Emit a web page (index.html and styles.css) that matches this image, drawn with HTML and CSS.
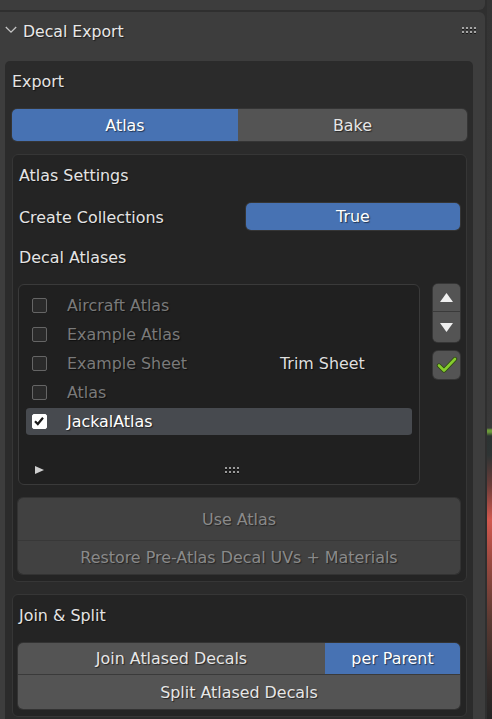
FILE: index.html
```html
<!DOCTYPE html>
<html>
<head>
<meta charset="utf-8">
<link rel="stylesheet" href="styles.css">
</head>
<body>
<div class="region">
  <div class="prev"></div>
  <div class="panel">
    <div class="header">
      <svg class="chev" width="12" height="8" viewBox="0 0 12 8"><polyline points="0.8,1 6,6.2 11.2,1" fill="none" stroke="#c4c4c4" stroke-width="1.3"/></svg>
      <span class="title">Decal Export</span>
      <span class="grip hgrip"><i></i><i></i><i></i><i></i><i></i><i></i><i></i><i></i></span>
    </div>
    <div class="exportbox">
      <div class="label">Export</div>
      <div class="toggle">
        <div class="tbtn active">Atlas</div>
        <div class="tbtn">Bake</div>
      </div>
      <div class="box settings">
        <div class="label lbl">Atlas Settings</div>
        <div class="proprow">
          <div class="label lbl grow">Create Collections</div>
          <div class="truebtn">True</div>
        </div>
        <div class="label lbl gap13">Decal Atlases</div>
        <div class="listrow">
          <div class="list">
            <div class="item"><span class="cb"></span><span class="name dim">Aircraft Atlas</span></div>
            <div class="item"><span class="cb"></span><span class="name dim">Example Atlas</span></div>
            <div class="item"><span class="cb"></span><span class="name dim">Example Sheet</span><span class="type">Trim Sheet</span></div>
            <div class="item"><span class="cb"></span><span class="name dim">Atlas</span></div>
            <div class="item sel"><span class="cb on"><svg width="14" height="14" viewBox="0 0 14 14"><polyline points="3,7.2 5.8,10 11,3.8" fill="none" stroke="#1a1a1a" stroke-width="2.2"/></svg></span><span class="name">JackalAtlas</span></div>
            <div class="listfoot">
              <svg class="tri" width="9" height="8" viewBox="0 0 9 8"><polygon points="0,0 9,4 0,8" fill="#cfcfcf"/></svg>
              <span class="grip lgrip"><i></i><i></i><i></i><i></i><i></i><i></i><i></i><i></i></span>
            </div>
          </div>
          <div class="side">
            <div class="updown">
              <div class="sbtn up"><svg width="13" height="9" viewBox="0 0 13 9"><polygon points="6.5,0 13,9 0,9" fill="#f0f0f0"/></svg></div>
              <div class="sbtn down"><svg width="13" height="9" viewBox="0 0 13 9"><polygon points="0,0 13,0 6.5,9" fill="#f0f0f0"/></svg></div>
            </div>
            <div class="sbtn check"><svg width="22" height="18" viewBox="0 0 22 18"><polyline points="3,9.5 8,14.5 19,3" fill="none" stroke="#2f4a12" stroke-width="4.4" stroke-linejoin="round" stroke-linecap="round"/><polyline points="3,9.5 8,14.5 19,3" fill="none" stroke="#86cc2e" stroke-width="2.6" stroke-linejoin="round" stroke-linecap="round"/></svg></div>
          </div>
        </div>
        <div class="stack">
          <div class="dbtn use">Use Atlas</div>
          <div class="dbtn restore">Restore Pre-Atlas Decal UVs + Materials</div>
        </div>
      </div>
      <div class="box join">
        <div class="label lbl">Join &amp; Split</div>
        <div class="jstack">
          <div class="jrow">
            <div class="jbtn grow">Join Atlased Decals</div>
            <div class="jbtn blue">per Parent</div>
          </div>
          <div class="jbtn split">Split Atlased Decals</div>
        </div>
      </div>
    </div>
  </div>
</div>
<div class="viewport"></div>
</body>
</html>
```
FILE: styles.css
```css
* { box-sizing: border-box; }
html, body { margin: 0; padding: 0; }
body {
  width: 492px;
  height: 719px;
  overflow: hidden;
  background: #2f2f2f;
  display: flex;
  font-family: "DejaVu Sans", sans-serif;
  font-size: 15.9px;
  color: #e4e4e4;
}
.region {
  width: 487px;
  display: flex;
  flex-direction: column;
  gap: 2px;
}
.prev {
  height: 10px;
  background: #3d3d3d;
  margin-right: 2px;
  border-radius: 0 0 6px 0;
}
.panel {
  flex: 1;
  background: #3d3d3d;
  margin-right: 2px;
  border-radius: 0 6px 0 0;
  padding: 0 12px 0 5px;
  overflow: hidden;
}
.viewport {
  flex: 1;
  background: linear-gradient(180deg, #343434 0px, #383838 410px, #3a3a3a 428px, #6c9a3a 430px, #6c9a3a 432px, #2c3332 436px, #2e3434 455px, #6a3c38 485px, #d2584e 520px, #9c4a40 560px, #5a3a32 620px, #342a28 680px, #242424 719px);
}
.header {
  height: 38px;
  display: flex;
  align-items: center;
  margin-bottom: 11px;
}
.chev { display: block; margin-right: 6px; margin-top: -2px; }
.title {
  flex: 1;
  font-size: 15.7px;
  color: #e8e8e8;
  text-shadow: 1px 1px 1px rgba(0,0,0,0.55);
}
.grip {
  display: grid;
  grid-template-columns: repeat(4, 2px);
  grid-auto-rows: 2px;
  column-gap: 2px;
  row-gap: 2px;
}
.grip i {
  display: block;
  width: 2px;
  height: 2px;
  background: #a6a6a6;
  box-shadow: 0 1px 0 rgba(0,0,0,0.6);
}
.hgrip { margin-right: -3px; margin-top: -2px; }
.exportbox {
  background: #2b2b2b;
  border-radius: 5px;
  padding: 6px 6px 0 7px;
  height: 700px;
}
.label {
  height: 28px;
  line-height: 29px;
  text-shadow: 1px 1px 1px rgba(0,0,0,0.55);
  white-space: nowrap;
}
.toggle {
  margin-top: 14px;
  height: 32px;
  display: flex;
  border-radius: 5px;
  overflow: hidden;
  box-shadow: 0 0 0 1px #353535;
}
.tbtn {
  flex: 1;
  display: flex;
  align-items: center;
  justify-content: center;
  background: #545454;
  color: #e6e6e6;
  text-shadow: 1px 1px 1px rgba(0,0,0,0.55);
}
.tbtn.active { background: #4772b3; color: #ffffff; flex: 0 0 226px; }
.box {
  background: #242424;
  border: 1px solid #363636;
  border-radius: 6px;
}
.settings {
  margin-top: 13px;
  padding: 6px 6px 7px 5px;
}
.lbl { padding-left: 1px; }
.proprow {
  margin-top: 14px;
  height: 27px;
  display: flex;
  align-items: center;
}
.grow { flex: 1; }
.truebtn {
  width: 214px;
  height: 27px;
  background: #4772b3;
  border-radius: 5px;
  display: flex;
  align-items: center;
  justify-content: center;
  color: #fff;
  text-shadow: 1px 1px 1px rgba(0,0,0,0.55);
  box-shadow: 0 0 0 1px #353535;
}
.gap13 { margin-top: 13px; }
.listrow {
  margin-top: 13px;
  display: flex;
  gap: 13px;
}
.list {
  width: 402px;
  height: 201px;
  background: #202020;
  border: 1px solid #3a3a3a;
  border-radius: 6px;
  padding: 6px 7px 4px 7px;
  display: flex;
  flex-direction: column;
}
.item {
  height: 29px;
  padding: 1px 0;
  display: flex;
  align-items: center;
  border-radius: 4px;
}
.item.sel { background: #474a4f; background-clip: content-box; }
.cb {
  width: 15px;
  height: 15px;
  margin-left: 6px;
  border: 1.5px solid #656565;
  background: #2a2a2a;
  border-radius: 2px;
  flex: none;
  display: flex;
}
.cb.on { background: #ffffff; border-color: #ffffff; }
.cb.on svg { margin: -1px; }
.name {
  margin-left: 20px;
  width: 213px;
  white-space: nowrap;
  color: #ffffff;
  text-shadow: 1px 1px 1px rgba(0,0,0,0.55);
}
.name.dim { color: #7a7a7a; }
.type {
  color: #dedede;
  white-space: nowrap;
  text-shadow: 1px 1px 1px rgba(0,0,0,0.55);
}
.listfoot {
  margin-top: auto;
  height: 20px;
  display: flex;
  align-items: center;
}
.tri { display: block; margin-left: 9px; }
.lgrip { margin-left: 181px; }
.lgrip i { background: #9a9a9a; }
.side {
  width: 27px;
  display: flex;
  flex-direction: column;
}
.updown {
  height: 58px;
  border-radius: 5px;
  overflow: hidden;
  display: flex;
  flex-direction: column;
  background: #545454;
  box-shadow: 0 0 0 1px #363636;
}
.sbtn {
  display: flex;
  align-items: center;
  justify-content: center;
  background: #545454;
}
.up { height: 28px; border-bottom: 1px solid #3a3a3a; }
.down { flex: 1; }
.sbtn svg { display: block; }
.check {
  margin-top: 9px;
  height: 28px;
  border-radius: 5px;
  box-shadow: 0 0 0 1px #363636;
}
.stack {
  margin-top: 13px;
  border-radius: 5px;
  overflow: hidden;
  box-shadow: 0 0 0 1px #333333;
}
.dbtn {
  display: flex;
  align-items: center;
  justify-content: center;
  background: #414141;
  color: #8a8a8a;
  text-shadow: 1px 1px 1px rgba(0,0,0,0.45);
  white-space: nowrap;
}
.use { height: 43px; border-bottom: 1px solid #383838; }
.restore { height: 33px; }
.join {
  margin-top: 12px;
  padding: 6px 6px 7px 5px;
}
.jstack {
  margin-top: 14px;
  border-radius: 5px;
  overflow: hidden;
  box-shadow: 0 0 0 1px #333333;
}
.jrow { display: flex; height: 32px; border-bottom: 1px solid #3a3a3a; }
.jbtn {
  display: flex;
  align-items: center;
  justify-content: center;
  background: #545454;
  color: #e6e6e6;
  text-shadow: 1px 1px 1px rgba(0,0,0,0.55);
  white-space: nowrap;
}
.jbtn.blue { width: 135px; background: #4772b3; color: #fff; }
.split { height: 34px; }
```
